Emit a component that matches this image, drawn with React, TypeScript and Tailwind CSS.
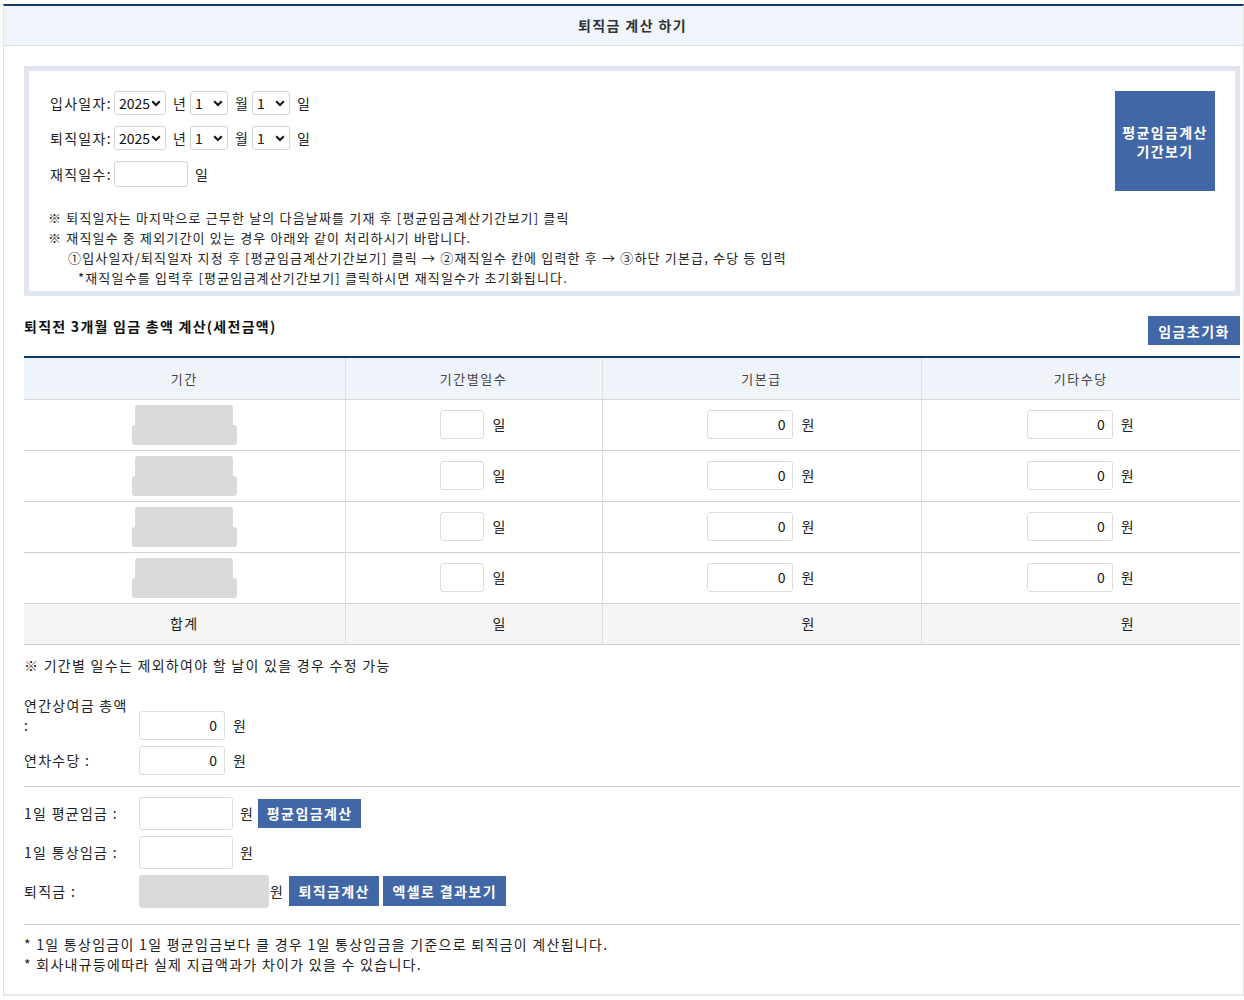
import React from 'react';

const font = { fontFamily: "'Noto Sans CJK KR', 'Noto Sans', sans-serif" };

function FakeSelect({ value, width }: { value: string; width: string }) {
  return (
    <div
      className={`${width} h-[24px] flex items-center justify-between pl-[4px] pr-[4px] border border-[#d4d4d4] rounded-[3px] bg-white text-[14px] text-[#111] tracking-normal`}
    >
      <span className="leading-none">{value}</span>
      <svg width="10" height="7" viewBox="0 0 10 7" className="shrink-0">
        <path d="M1.2 1.2 5 5 8.8 1.2" fill="none" stroke="#111" strokeWidth="2" />
      </svg>
    </div>
  );
}

function Unit({ children }: { children: React.ReactNode }) {
  return <span className="ml-[7px] mr-[5px] w-[12px] whitespace-nowrap tracking-normal">{children}</span>;
}

function Btn({ children, className = '' }: { children: React.ReactNode; className?: string }) {
  return (
    <button
      className={`bg-[#4267a7] text-white font-bold text-[14px] tracking-[0.1em] leading-none flex items-center justify-center ${className}`}
    >
      {children}
    </button>
  );
}

function MoneyInput({ value = '0', className = 'w-[86px] h-[29px]' }: { value?: string; className?: string }) {
  return (
    <div
      className={`${className} border border-[#dcdcdc] rounded-[3px] bg-white flex items-center justify-end pr-[7px] text-[14px] text-[#111] tracking-normal`}
    >
      {value}
    </div>
  );
}

function Blur() {
  return (
    <div className="flex flex-col items-center">
      <div className="w-[98px] h-[20px] rounded-t-[3px] bg-[#dadada]" />
      <div className="w-[105px] h-[20px] rounded-[3px] bg-[#dadada]" />
    </div>
  );
}

const rows = [0, 1, 2, 3];

export default function App() {
  return (
    <div className="min-h-screen bg-white pt-[4px] pl-[3px] text-[#222] tracking-[0.08em]" style={font}>
      <div className="w-[1241px] border-t-2 border-t-[#0d3a6b] border-x border-x-[#e2e2e2] border-b-2 border-b-[#e3e8ef] pb-[20px]">
        {/* Title */}
        <div className="h-[40px] pl-[18px] bg-[#f0f4fb] border-b border-[#dcdcdc] flex items-center justify-center font-bold text-[14px] text-[#333] tracking-[0.1em]">
          퇴직금 계산 하기
        </div>

        <div className="pl-[20px] pr-[3px] pt-[20px]">
          {/* Info box */}
          <div className="border-[5px] border-[#e1e5f1] flex justify-between">
            <div className="pl-[21px] pt-[20px] pb-[3px] text-[14px]">
              <div className="flex flex-col gap-[11px]">
                {['입사일자:', '퇴직일자:'].map((label) => (
                  <div key={label} className="flex items-center h-[24px]">
                    <span className="w-[64px] whitespace-nowrap">{label}</span>
                    <FakeSelect value="2025" width="w-[52px]" />
                    <Unit>년</Unit>
                    <FakeSelect value="1" width="w-[38px]" />
                    <Unit>월</Unit>
                    <FakeSelect value="1" width="w-[38px]" />
                    <Unit>일</Unit>
                  </div>
                ))}
                <div className="flex items-center h-[26px]">
                  <span className="w-[64px] whitespace-nowrap">재직일수:</span>
                  <div className="w-[74px] h-[26px] border border-[#d4d4d4] rounded-[3px] bg-white" />
                  <Unit>일</Unit>
                </div>
              </div>
              <div className="mt-[21px] text-[13px] leading-[20px] text-[#222] tracking-[0.09em]">
                <p className="-ml-[2px]">※ 퇴직일자는 마지막으로 근무한 날의 다음날짜를 기재 후 [평균임금계산기간보기] 클릭</p>
                <p className="-ml-[2px]">※ 재직일수 중 제외기간이 있는 경우 아래와 같이 처리하시기 바랍니다.</p>
                <p className="pl-[18px]">
                  ①입사일자/퇴직일자 지정 후 [평균임금계산기간보기] 클릭 → ②재직일수 칸에 입력한 후 → ③하단 기본급, 수당 등 입력
                </p>
                <p className="pl-[28px]">*재직일수를 입력후 [평균임금계산기간보기] 클릭하시면 재직일수가 초기화됩니다.</p>
              </div>
            </div>
            <Btn className="w-[100px] h-[100px] mt-[20px] mr-[20px] flex-col gap-[5px] leading-[15px]">
              <span>평균임금계산</span>
              <span>기간보기</span>
            </Btn>
          </div>

          {/* Section title */}
          <div className="mt-[20px] flex justify-between items-start h-[29px]">
            <h2 className="font-bold text-[14px] leading-[20px] text-[#111] tracking-[0.09em]">
              퇴직전 3개월 임금 총액 계산(세전금액)
            </h2>
            <Btn className="w-[92px] h-[29px]">임금초기화</Btn>
          </div>

          {/* Table */}
          <table className="mt-[11px] w-[1216px] table-fixed border-collapse border-t-2 border-t-[#0b3a6b] text-[14px]">
            <colgroup>
              <col className="w-[321px]" />
              <col className="w-[257px]" />
              <col className="w-[319px]" />
              <col className="w-[319px]" />
            </colgroup>
            <thead>
              <tr className="h-[42px] bg-[#eff3fa] text-[13px] text-[#444] border-b border-b-[#d6d6d6] tracking-[0.12em]">
                <th className="font-normal border-r border-[#dedede]">기간</th>
                <th className="font-normal border-r border-[#dedede]">기간별일수</th>
                <th className="font-normal border-r border-[#dedede]">기본급</th>
                <th className="font-normal">기타수당</th>
              </tr>
            </thead>
            <tbody>
              {rows.map((r) => (
                <tr key={r} className="h-[51px] border-b border-b-[#cfcfcf] last:border-b-0">
                  <td className="border-r border-[#dedede]">
                    <Blur />
                  </td>
                  <td className="border-r border-[#dedede]">
                    <div className="flex items-center justify-center gap-[8px]">
                      <div className="w-[44px] h-[29px] border border-[#dcdcdc] rounded-[3px] bg-white" />
                      <span>일</span>
                    </div>
                  </td>
                  <td className="border-r border-[#dedede]">
                    <div className="flex items-center justify-center gap-[8px]">
                      <MoneyInput />
                      <span>원</span>
                    </div>
                  </td>
                  <td>
                    <div className="flex items-center justify-center gap-[8px]">
                      <MoneyInput />
                      <span>원</span>
                    </div>
                  </td>
                </tr>
              ))}
              <tr className="h-[41px] bg-[#f5f5f5] border-t border-t-[#1d3a5c] border-b border-b-[#cccccc]">
                <td className="border-r border-[#dedede] text-center">합계</td>
                <td className="border-r border-[#dedede]">
                  <div className="flex items-center justify-center gap-[8px]">
                    <span className="w-[44px]" />
                    <span>일</span>
                  </div>
                </td>
                <td className="border-r border-[#dedede]">
                  <div className="flex items-center justify-center gap-[8px]">
                    <span className="w-[86px]" />
                    <span>원</span>
                  </div>
                </td>
                <td>
                  <div className="flex items-center justify-center gap-[8px]">
                    <span className="w-[86px]" />
                    <span>원</span>
                  </div>
                </td>
              </tr>
            </tbody>
          </table>

          <p className="mt-[10px] text-[14px] leading-[20px]">※ 기간별 일수는 제외하여야 할 날이 있을 경우 수정 가능</p>

          {/* Bonus / annual leave */}
          <div className="mt-[20px] text-[14px]">
            <div className="flex items-start">
              <span className="w-[115px] leading-[20px]">
                연간상여금 총액
                <br />:
              </span>
              <div className="mt-[16px] flex items-center gap-[8px]">
                <MoneyInput />
                <span>원</span>
              </div>
            </div>
            <div className="mt-[6px] flex items-center">
              <span className="w-[115px]">연차수당 :</span>
              <div className="flex items-center gap-[8px]">
                <MoneyInput />
                <span>원</span>
              </div>
            </div>
          </div>

          <div className="mt-[11px] h-px bg-[#cccccc]" />

          {/* Average wage */}
          <div className="mt-[10px] flex flex-col gap-[6px] text-[14px]">
            <div className="flex items-center h-[33px]">
              <span className="w-[115px] whitespace-nowrap">1일 평균임금 :</span>
              <div className="w-[94px] h-[33px] border border-[#dcdcdc] rounded-[3px] bg-white" />
              <span className="ml-[7px]">원</span>
              <Btn className="ml-[4px] w-[103px] h-[29px]">평균임금계산</Btn>
            </div>
            <div className="flex items-center h-[33px]">
              <span className="w-[115px] whitespace-nowrap">1일 통상임금 :</span>
              <div className="w-[94px] h-[33px] border border-[#dcdcdc] rounded-[3px] bg-white" />
              <span className="ml-[7px]">원</span>
            </div>
            <div className="flex items-center h-[33px]">
              <span className="w-[115px]">퇴직금 :</span>
              <div className="w-[130px] h-[33px] rounded-[3px] bg-[#dadada]" />
              <span className="ml-[1px]">원</span>
              <Btn className="ml-[5px] w-[90px] h-[30px]">퇴직금계산</Btn>
              <Btn className="ml-[4px] w-[123px] h-[30px]">엑셀로 결과보기</Btn>
            </div>
          </div>

          <div className="mt-[16px] h-px bg-[#cccccc]" />

          <div className="mt-[9px] text-[14px] leading-[20px]">
            <p>* 1일 통상임금이 1일 평균임금보다 클 경우 1일 통상임금을 기준으로 퇴직금이 계산됩니다.</p>
            <p>* 회사내규등에따라 실제 지급액과가 차이가 있을 수 있습니다.</p>
          </div>
        </div>
      </div>
    </div>
  );
}
